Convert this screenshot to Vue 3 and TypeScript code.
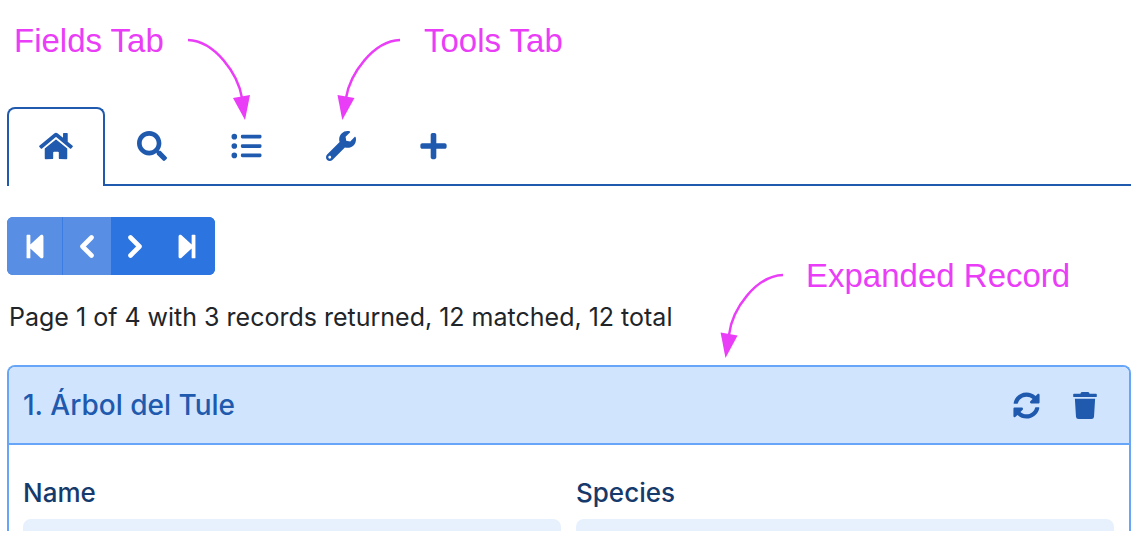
<script setup lang="ts">
import { ref } from 'vue'

interface Tab {
  id: string
  label: string
  viewBox: string
  width: number
  path: string
}

interface Pager {
  label: string
  disabled: boolean
  kind: 'first' | 'previous' | 'next' | 'last'
}

const tabs: Tab[] = [
  {
    id: 'home',
    label: 'Home',
    viewBox: '0 0 576 512',
    width: 34,
    path: 'M280.37 148.26L96 300.11V464a16 16 0 0 0 16 16l112.06-.29a16 16 0 0 0 15.92-16V368a16 16 0 0 1 16-16h64a16 16 0 0 1 16 16v95.64a16 16 0 0 0 16 16.05L464 480a16 16 0 0 0 16-16V300L295.67 148.26a12.19 12.19 0 0 0-15.3 0zM571.6 251.47L488 182.56V44.05a12 12 0 0 0-12-12h-56a12 12 0 0 0-12 12v72.61L318.47 43a48 48 0 0 0-61 0L4.34 251.47a12 12 0 0 0-1.6 16.9l25.5 31A12 12 0 0 0 45.15 301l235.22-193.74a12.19 12.19 0 0 1 15.3 0L530.9 301a12 12 0 0 0 16.9-1.6l25.5-31a12 12 0 0 0-1.7-16.93z',
  },
  {
    id: 'search',
    label: 'Search',
    viewBox: '0 0 512 512',
    width: 30,
    path: 'M505 442.7L405.3 343c-4.5-4.5-10.6-7-17-7H372c27.6-35.3 44-79.7 44-128C416 93.1 322.9 0 208 0S0 93.1 0 208s93.1 208 208 208c48.3 0 92.7-16.4 128-44v16.3c0 6.4 2.5 12.5 7 17l99.7 99.7c9.4 9.4 24.6 9.4 33.9 0l28.3-28.3c9.4-9.4 9.4-24.6.1-34zM208 336c-70.7 0-128-57.2-128-128 0-70.7 57.2-128 128-128 70.7 0 128 57.2 128 128 0 70.7-57.2 128-128 128z',
  },
  {
    id: 'fields',
    label: 'Fields',
    viewBox: '0 0 512 512',
    width: 31,
    path: 'M48 48a48 48 0 1 0 0 96a48 48 0 1 0 0-96zM48 208a48 48 0 1 0 0 96a48 48 0 1 0 0-96zM48 368a48 48 0 1 0 0 96a48 48 0 1 0 0-96zM184 64H488a24 24 0 0 1 24 24v16a24 24 0 0 1-24 24H184a24 24 0 0 1-24-24V88a24 24 0 0 1 24-24zM184 224H488a24 24 0 0 1 24 24v16a24 24 0 0 1-24 24H184a24 24 0 0 1-24-24v-16a24 24 0 0 1 24-24zM184 384H488a24 24 0 0 1 24 24v16a24 24 0 0 1-24 24H184a24 24 0 0 1-24-24v-16a24 24 0 0 1 24-24z',
  },
  {
    id: 'tools',
    label: 'Tools',
    viewBox: '0 0 512 512',
    width: 30,
    path: 'M507.73 109.1c-2.24-9.03-13.54-12.09-20.12-5.51l-74.36 74.36-67.88-11.31-11.31-67.88 74.36-74.36c6.62-6.62 3.43-17.9-5.66-20.16-47.38-11.74-99.55.91-136.58 37.93-39.64 39.64-50.55 97.1-34.05 147.2L18.74 402.76c-24.99 24.99-24.99 65.51 0 90.5 24.99 24.99 65.51 24.99 90.5 0l213.21-213.21c50.12 16.71 107.47 5.68 147.37-34.22 37.07-37.07 49.7-89.32 37.91-136.73zM64 472c-13.25 0-24-10.75-24-24 0-13.26 10.75-24 24-24s24 10.74 24 24c0 13.25-10.75 24-24 24z',
  },
  {
    id: 'add',
    label: 'Add',
    viewBox: '0 0 448 512',
    width: 27,
    path: 'M416 208H272V64c0-17.67-14.33-32-32-32h-32c-17.67 0-32 14.33-32 32v144H32c-17.67 0-32 14.33-32 32v32c0 17.67 14.33 32 32 32h144v144c0 17.67 14.33 32 32 32h32c17.67 0 32-14.33 32-32V304h144c17.67 0 32-14.33 32-32v-32c0-17.67-14.33-32-32-32z',
  },
]

const pagers: Pager[] = [
  { label: 'First page', disabled: true, kind: 'first' },
  { label: 'Previous page', disabled: true, kind: 'previous' },
  { label: 'Next page', disabled: false, kind: 'next' },
  { label: 'Last page', disabled: false, kind: 'last' },
]

const activeTab = ref('home')
const name = ref('')
const species = ref('')
</script>

<template>
  <main class="page">
    <nav class="tabs" role="tablist" aria-label="Sections">
      <button
        v-for="tab in tabs"
        :key="tab.id"
        type="button"
        role="tab"
        class="tab"
        :class="{ active: tab.id === activeTab }"
        :aria-selected="tab.id === activeTab"
        :aria-label="tab.label"
        @click="activeTab = tab.id"
      >
        <svg :viewBox="tab.viewBox" :width="tab.width" height="30" aria-hidden="true">
          <path :d="tab.path" />
        </svg>
      </button>
    </nav>

    <div class="pager" role="group" aria-label="Pages">
      <button
        v-for="pager in pagers"
        :key="pager.kind"
        type="button"
        class="pager-button"
        :disabled="pager.disabled"
        :aria-label="pager.label"
      >
        <svg v-if="pager.kind === 'first'" viewBox="0 0 448 512" width="24" height="27" aria-hidden="true">
          <path d="M64 468V44c0-6.6 5.4-12 12-12h48c6.6 0 12 5.4 12 12v176.4l195.5-181C352.1 22.3 384 36.6 384 64v384c0 27.4-31.9 41.7-52.5 24.6L136 292.7V468c0 6.6-5.4 12-12 12H76c-6.6 0-12-5.4-12-12z" />
        </svg>
        <svg v-else-if="pager.kind === 'last'" viewBox="0 0 448 512" width="24" height="27" aria-hidden="true">
          <path d="M384 44v424c0 6.6-5.4 12-12 12h-48c-6.6 0-12-5.4-12-12V291.6l-195.5 181C95.9 489.7 64 475.4 64 448V64c0-27.4 31.9-41.7 52.5-24.6L312 219.3V44c0-6.6 5.4-12 12-12h48c6.6 0 12 5.4 12 12z" />
        </svg>
        <svg v-else class="chevron" viewBox="0 0 16 27" width="16" height="27" aria-hidden="true">
          <path :d="pager.kind === 'previous' ? 'M12.5 4.5L3.5 13.5L12.5 22.5' : 'M3.5 4.5L12.5 13.5L3.5 22.5'" />
        </svg>
      </button>
    </div>

    <p class="summary">Page 1 of 4 with 3 records returned, 12 matched, 12 total</p>

    <section class="record">
      <header class="record-header">
        <h2 class="record-title">1. Árbol del Tule</h2>
        <div class="record-actions">
          <button type="button" class="icon-button" aria-label="Refresh record">
            <svg viewBox="0 0 512 512" width="27" height="27" aria-hidden="true">
              <path d="M370.72 133.28C339.458 104.008 298.888 87.962 255.848 88c-77.458.068-144.328 53.178-162.791 126.85-1.344 5.363-6.122 9.15-11.651 9.15H24.103c-7.498 0-13.194-6.807-11.807-14.176C33.933 94.924 134.813 8 256 8c66.448 0 126.791 26.136 171.315 68.685L463.03 40.97C478.149 25.851 504 36.559 504 57.941V192c0 13.255-10.745 24-24 24H345.941c-21.382 0-32.09-25.851-16.971-40.971l41.75-41.749zM32 296h134.059c21.382 0 32.09 25.851 16.971 40.971l-41.75 41.75c31.262 29.273 71.835 45.319 114.876 45.28 77.418-.07 144.315-53.144 162.787-126.849 1.344-5.363 6.122-9.15 11.651-9.15h57.304c7.498 0 13.194 6.807 11.807 14.176C478.067 417.076 377.187 504 256 504c-66.448 0-126.791-26.136-171.315-68.685L48.97 471.03C33.851 486.149 8 475.441 8 454.059V320c0-13.255 10.745-24 24-24z" />
            </svg>
          </button>
          <button type="button" class="icon-button" aria-label="Delete record">
            <svg viewBox="0 0 448 512" width="24" height="27" aria-hidden="true">
              <path d="M432 32H312l-9.4-18.7A24 24 0 0 0 281.1 0H166.8a23.72 23.72 0 0 0-21.4 13.3L136 32H16A16 16 0 0 0 0 48v32a16 16 0 0 0 16 16h416a16 16 0 0 0 16-16V48a16 16 0 0 0-16-16zM53.2 467a48 48 0 0 0 47.9 45h245.8a48 48 0 0 0 47.9-45L416 128H32z" />
            </svg>
          </button>
        </div>
      </header>
      <div class="record-body">
        <div class="field">
          <label for="name">Name</label>
          <div class="field-clip"><input id="name" v-model="name" type="text" /></div>
        </div>
        <div class="field">
          <label for="species">Species</label>
          <div class="field-clip"><input id="species" v-model="species" type="text" /></div>
        </div>
      </div>
    </section>

    <span class="note note-fields">Fields Tab</span>
    <svg class="arrow arrow-fields" viewBox="0 0 64 84" width="64" height="84" aria-hidden="true">
      <path class="arrow-line" d="M1 4C28 5 51 38 55 62" />
      <path class="arrow-head" d="M46 62L63 59L58 84Z" />
    </svg>

    <span class="note note-tools">Tools Tab</span>
    <svg class="arrow arrow-tools" viewBox="0 0 64 84" width="64" height="84" aria-hidden="true">
      <path class="arrow-line" d="M63 4C36 5 13 38 9 62" />
      <path class="arrow-head" d="M17.5 62L.5 59L5.3 84Z" />
    </svg>

    <span class="note note-record">Expanded Record</span>
    <svg class="arrow arrow-record" viewBox="0 0 64 88" width="64" height="88" aria-hidden="true">
      <path class="arrow-line" d="M63 5C36 6 12 39 9 65" />
      <path class="arrow-head" d="M17.6 65.5L.6 62.5L5.5 88Z" />
    </svg>
  </main>
</template>

<style>
body {
  margin: 0;
  background: #fff;
}
</style>

<style scoped>
.page {
  position: relative;
  box-sizing: border-box;
  padding: 107px 3px 11px 7px;
  font-family: Inter, "Liberation Sans", sans-serif;
  color: #212529;
}

svg {
  display: block;
  fill: currentColor;
}

button {
  margin: 0;
  font: inherit;
  cursor: pointer;
}

.tabs {
  display: flex;
  border-bottom: 2px solid #205aae;
}

.tab {
  margin-bottom: -2px;
  padding: 22px 30px 25px;
  border: 2px solid transparent;
  border-bottom: 0;
  border-radius: 8px 8px 0 0;
  background: none;
  color: #205aae;
}

.tab.active {
  border-color: #205aae;
  background: #fff;
}

.pager {
  display: flex;
  width: max-content;
  margin-top: 31px;
  overflow: hidden;
  border-radius: 6px;
  background: #2c74e0;
}

.pager-button {
  display: flex;
  align-items: center;
  height: 58px;
  padding: 0 16px;
  border: 0;
  background: #2c74e0;
  color: #fff;
}

.pager-button:disabled {
  background: #588fe4;
  cursor: default;
}

.pager-button:disabled:first-child {
  box-shadow: inset -1px 0 #3c7de1;
}

.chevron {
  fill: none;
  stroke: currentColor;
  stroke-width: 4.6;
  stroke-linecap: round;
  stroke-linejoin: round;
}

.summary {
  margin: 24px 2px 0;
  font-size: 25px;
  line-height: 36px;
}

.record {
  margin-top: 30px;
  border: 2px solid #66a5f8;
  border-bottom: 0;
  border-radius: 8px 8px 0 0;
}

.record-header {
  display: flex;
  align-items: center;
  justify-content: space-between;
  height: 76px;
  padding: 0 32px 0 14px;
  border-bottom: 2px solid #66a5f8;
  border-radius: 6px 6px 0 0;
  background: #d1e4fd;
  color: #205aae;
}

.record-title {
  margin: 0;
  font-size: 28px;
  font-weight: 500;
  line-height: 36px;
}

.record-actions {
  display: flex;
  gap: 33px;
}

.icon-button {
  padding: 0;
  border: 0;
  background: none;
  color: #205aae;
}

.record-body {
  display: grid;
  grid-template-columns: 1fr 1fr;
  gap: 15px;
  padding: 30px 15px 0 14px;
}

.field label {
  display: block;
  color: #163a6b;
  font-size: 26px;
  font-weight: 500;
  line-height: 36px;
}

.field-clip {
  height: 12px;
  margin-top: 8px;
  overflow: hidden;
}

.field input {
  display: block;
  box-sizing: border-box;
  width: 100%;
  height: 56px;
  padding: 0 16px;
  border: 0;
  border-radius: 8px;
  background: #e7f1fe;
  color: #212529;
  font: inherit;
}

.note {
  position: absolute;
  color: #ea3df7;
  font-family: "Liberation Sans", Arial, sans-serif;
  font-size: 33px;
  line-height: 38px;
  white-space: nowrap;
}

.note-fields {
  top: 22px;
  left: 14px;
}

.note-tools {
  top: 22px;
  left: 424px;
}

.note-record {
  top: 257px;
  left: 806px;
}

.arrow {
  position: absolute;
  pointer-events: none;
}

.arrow-line {
  fill: none;
  stroke: #ea3df7;
  stroke-width: 2.4;
}

.arrow-head {
  fill: #ea3df7;
}

.arrow-fields {
  top: 36px;
  left: 187px;
}

.arrow-tools {
  top: 36px;
  left: 337px;
}

.arrow-record {
  top: 270px;
  left: 720px;
}
</style>
